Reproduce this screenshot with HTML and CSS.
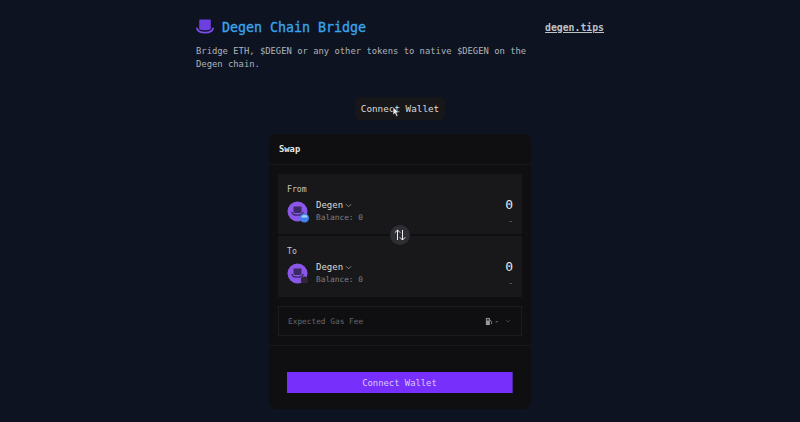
FILE: index.html
```html
<!DOCTYPE html>
<html lang="en">
<head>
    <meta charset="UTF-8">
    <meta name="viewport" content="width=device-width, initial-scale=1.0">
    <title>Degen Chain Bridge</title>
    <link rel="stylesheet" href="styles.css">
</head>
<body>
    <main class="page">
        <header class="top">
            <div class="brand">
                <svg class="hat" viewBox="0 0 18 16" width="18" height="16">
                    <path d="M4 0.5h10q.8 0 .8 .8v9c-3 1.3-8.6 1.3-11.6 0v-9q0-.8 .8-.8z" fill="#6d3fe0"/>
                    <path d="M1 9.5c1.2 5.4 14.8 5.4 16 0" fill="none" stroke="#7c4bf0" stroke-width="1.8" stroke-linecap="round"/>
                </svg>
                <h1 class="brand-name">Degen Chain Bridge</h1>
            </div>
            <a class="site-link" href="#">degen.tips</a>
        </header>
        <p class="intro">Bridge ETH, $DEGEN or any other tokens to native $DEGEN on the Degen chain.</p>

        <div class="connect-row">
            <button class="connect-top">Connect Wallet</button>
            <svg class="cursor" viewBox="0 0 9 12" width="9" height="12">
                <path d="M1 1l0 8 2-1.6 1.4 3 1.6-.7-1.4-2.9 2.6-.2z" fill="#e8e8e8" stroke="#222" stroke-width="0.7"/>
            </svg>
        </div>

        <section class="card">
            <div class="card-head">Swap</div>
            <div class="card-body">
                <div class="panels">
                    <div class="panel">
                        <div class="panel-label">From</div>
                        <div class="panel-row">
                            <div class="token">
                                <svg class="token-icon" viewBox="0 0 24 24" width="24" height="24">
                                    <circle cx="10.5" cy="10.5" r="10" fill="#8a57e8"/>
                                    <path d="M6.5 5.5h8v6c-2 .8-6 .8-8 0z" fill="#3b2a63"/>
                                    <path d="M5 11.5c1 3.6 10 3.6 11 0" fill="none" stroke="#3b2a63" stroke-width="1.3" stroke-linecap="round"/>
                                    <circle cx="17.5" cy="17" r="4.5" fill="#3f83e8"/>
                                    <path d="M14.5 16.5a3 2.4 0 0 1 6 0z" fill="#a9cdf5"/>
                                </svg>
                                <div class="token-text">
                                    <div class="token-name"><span>Degen</span>
                                        <svg class="chev" viewBox="0 0 8 5" width="7" height="5"><path d="M1 1l3 3 3-3" fill="none" stroke="currentColor" stroke-width="0.9"/></svg>
                                    </div>
                                    <div class="balance">Balance: 0</div>
                                </div>
                            </div>
                            <div class="amount">
                                <div class="amount-value">0</div>
                                <div class="amount-usd">-</div>
                            </div>
                        </div>
                    </div>
                    <div class="panel panel-to">
                        <div class="panel-label">To</div>
                        <div class="panel-row">
                            <div class="token">
                                <svg class="token-icon" viewBox="0 0 24 24" width="24" height="24">
                                    <circle cx="10.5" cy="10.5" r="10" fill="#8a57e8"/>
                                    <path d="M6.5 5.5h8v6c-2 .8-6 .8-8 0z" fill="#3b2a63"/>
                                    <path d="M5 11.5c1 3.6 10 3.6 11 0" fill="none" stroke="#3b2a63" stroke-width="1.3" stroke-linecap="round"/>
                                    <circle cx="17.5" cy="17" r="3.6" fill="#2c2836"/>
                                </svg>
                                <div class="token-text">
                                    <div class="token-name"><span>Degen</span>
                                        <svg class="chev" viewBox="0 0 8 5" width="7" height="5"><path d="M1 1l3 3 3-3" fill="none" stroke="currentColor" stroke-width="0.9"/></svg>
                                    </div>
                                    <div class="balance">Balance: 0</div>
                                </div>
                            </div>
                            <div class="amount">
                                <div class="amount-value">0</div>
                                <div class="amount-usd">-</div>
                            </div>
                        </div>
                    </div>
                    <button class="flip">
                        <svg viewBox="0 0 14 14" width="14" height="14">
                            <path d="M4.5 12V2M1.8 4.7L4.5 2l2.7 2.7M9.5 2v10M6.8 9.3L9.5 12l2.7-2.7" fill="none" stroke="#eeeeee" stroke-width="1"/>
                        </svg>
                    </button>
                </div>
                <div class="gas">
                    <span>Expected Gas Fee</span>
                    <span class="gas-right">
                        <svg viewBox="0 0 9 10" width="8" height="9">
                            <path d="M1 1h4.5v8H1z" fill="#9a9a9a"/>
                            <path d="M5.5 3.5l2 1.5v3" fill="none" stroke="#9a9a9a" stroke-width="0.9"/>
                            <path d="M2 2h2.5v2H2z" fill="#333"/>
                        </svg>
                        <span class="gas-dash">-</span>
                        <svg class="gas-chev" viewBox="0 0 8 5" width="6" height="4"><path d="M1 1l3 3 3-3" fill="none" stroke="currentColor" stroke-width="0.8"/></svg>
                    </span>
                </div>
            </div>
            <div class="card-foot">
                <button class="connect-main">Connect Wallet</button>
            </div>
        </section>
    </main>
</body>
</html>
```

FILE: styles.css
```css
* {
    box-sizing: border-box;
}
html, body {
    height: 100%;
}
body {
    margin: 0;
    background-color: #0d1321;
    font-family: "DejaVu Sans Mono", "Liberation Mono", monospace;
    color: #c9cbce;
    overflow: hidden;
}
button {
    font-family: inherit;
    border: none;
    cursor: pointer;
}
.page {
    width: 408px;
    margin: 0 auto;
    padding-top: 17px;
}
.top {
    display: flex;
    justify-content: space-between;
    align-items: center;
    height: 20px;
}
.brand {
    display: flex;
    align-items: center;
    gap: 8px;
}
.brand-name {
    margin: 0;
    font-size: 13.3px;
    font-weight: 500;
    color: #3aa5ec;
    -webkit-text-stroke: 0.3px #3aa5ec;
}
.site-link {
    font-size: 9.8px;
    font-weight: 700;
    color: #bfc2c6;
}
.intro {
    width: 336px;
    margin: 8px 0 0;
    font-size: 8.85px;
    line-height: 13px;
    color: #b0b3b8;
}
.connect-row {
    position: relative;
    display: flex;
    justify-content: center;
    margin-top: 26px;
}
.connect-top {
    height: 23px;
    width: 90px;
    padding: 0;
    border-radius: 5px;
    background: #17171a;
    color: #dcdcdc;
    font-size: 9.3px;
}
.cursor {
    position: absolute;
    left: 196px;
    top: 9px;
}
.card {
    width: 262px;
    height: 275px;
    margin: 14px auto 0;
    display: flex;
    flex-direction: column;
    background: #0f0f11;
    border-radius: 8px;
}
.card-head {
    height: 31px;
    padding: 10px 10px 0;
    border-bottom: 1px solid #1a1a1c;
    font-size: 8.8px;
    font-weight: 700;
    color: #e8e8e8;
}
.card-body {
    padding: 9px 9px 0;
    height: 181px;
    border-bottom: 1px solid #1a1a1c;
}
.panels {
    position: relative;
    display: flex;
    flex-direction: column;
    gap: 2px;
}
.panel {
    height: 60px;
    padding: 10px 9px 0;
    background: #18181a;
}
.panel-to {
    height: 61px;
}
.panel-label {
    font-size: 8.2px;
    line-height: 10px;
    color: #c2c4c6;
}
.panel-row {
    display: flex;
    justify-content: space-between;
    margin-top: 1px;
}
.token {
    display: flex;
    align-items: center;
    gap: 5px;
}
.token-icon {
    margin-top: 4px;
}
.token-name {
    display: flex;
    align-items: center;
    gap: 2px;
    font-size: 9px;
    line-height: 12px;
    color: #dcdcdc;
}
.chev {
    color: #a0a0a0;
}
.balance {
    margin-top: 2px;
    font-size: 7.8px;
    line-height: 10px;
    color: #808185;
}
.amount {
    text-align: right;
}
.amount-value {
    margin-top: 2px;
    font-size: 13px;
    line-height: 16px;
    color: #e6e6e6;
}
.amount-usd {
    margin-top: 4px;
    font-size: 8px;
    line-height: 10px;
    color: #77787c;
}
.flip {
    position: absolute;
    left: 112px;
    top: 51px;
    width: 20px;
    height: 20px;
    padding: 3px;
    border-radius: 50%;
    background: #2e2e35;
}
.gas {
    display: flex;
    justify-content: space-between;
    align-items: center;
    height: 30px;
    margin-top: 9px;
    padding: 0 10px 0 9px;
    border: 1px solid #1c1c1f;
    font-size: 7.8px;
    color: #66676a;
}
.gas-right {
    display: flex;
    align-items: center;
    gap: 1px;
    color: #b0b0b0;
}
.gas-chev {
    margin-left: 5px;
    color: #66676a;
}
.card-foot {
    padding: 26px 18px 0;
}
.connect-main {
    display: block;
    width: 226px;
    height: 21px;
    padding: 0;
    background: #772ffb;
    border-right: 1px solid #4a2a9c;
    color: #dcc9ff;
    font-size: 8.85px;
}
```
